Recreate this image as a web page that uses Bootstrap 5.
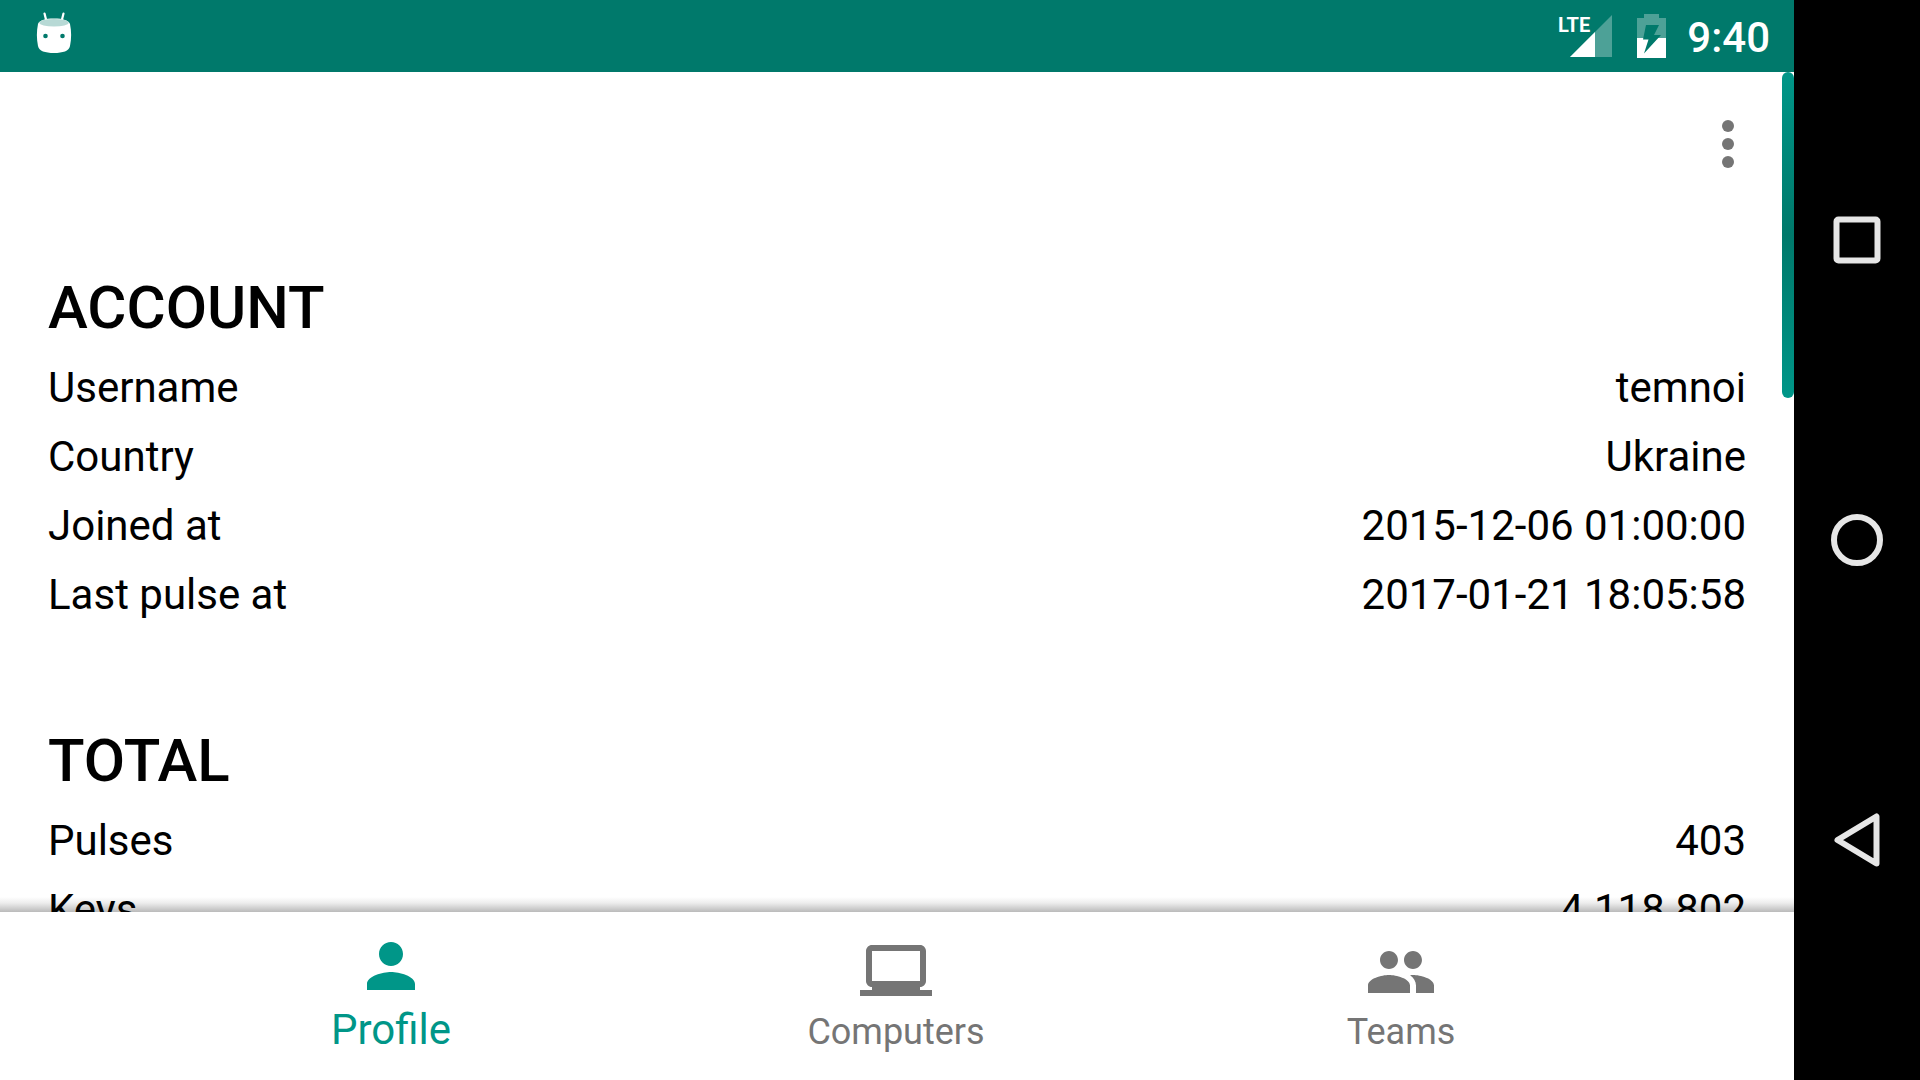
<!DOCTYPE html>
<html lang="en">
<head>
<meta charset="utf-8">
<meta name="viewport" content="width=device-width, initial-scale=1">
<title>Profile</title>
<link href="https://cdn.jsdelivr.net/npm/bootstrap@5.3.0/dist/css/bootstrap.min.css" rel="stylesheet">
<style>
  body { font-family: Roboto, "Noto Sans", sans-serif; font-size: 42px; color: #000; background: #fff; }
  svg { display: block; flex: none; }
  .status-bar { height: 72px; line-height: 72px; background: #00796b; padding: 0 24px 0 18px; }
  .status-clock { font-weight: 500; padding-top: 4px; margin-left: 19px; }
  .battery-icon { margin-left: 22px; }
  .net-label { font: 700 20px/20px "Liberation Sans Narrow", Roboto, sans-serif; fill: #fff; }
  .tool-bar { height: 144px; padding-right: 30px; }
  .stats { padding: 0 48px; }
  .stat-group { padding-top: 56px; margin-bottom: 40px; }
  .stat-group h2 { font-size: 60px; line-height: 72px; font-weight: 500; margin: 0 0 9px; }
  .stat-group dl { line-height: 69px; margin: 0; }
  .stat-group dt, .stat-group dd { font-weight: 400; margin: 0; }
  .scroll-thumb { top: 0; right: 0; width: 12px; height: 326px; border-radius: 6px; background: linear-gradient(#009688, #00796b, #009688); }
  .bottom-shade { bottom: 0; left: 0; right: 0; height: 15px; background: linear-gradient(rgba(0,0,0,0), rgba(0,0,0,.07) 40%, rgba(0,0,0,.27)); }
  .tabs-bar { height: 168px; background: #fff; padding-right: 2px; }
  .tab-link { flex: 1 1 0; max-width: 505px; padding-top: 24px; font-size: 36px; line-height: 48px; color: #757575; }
  .tab-link.active { padding-top: 18px; gap: 4px; font-size: 42px; color: #009688; }
  .system-nav { width: 126px; background: #000; }
  .system-nav button { flex: 0 1 300px; }
  .plain-btn { background: none; border: 0; padding: 0; }
</style>
<script src="https://cdn.jsdelivr.net/npm/bootstrap@5.3.0/dist/js/bootstrap.bundle.min.js"></script>
</head>
<body>
<div class="d-flex vh-100 overflow-hidden">
  <div class="d-flex flex-column flex-grow-1">
    <header class="status-bar d-flex align-items-center text-white">
      <svg width="72" height="72" viewBox="18 0 72 72" aria-hidden="true">
        <path d="M44.500 13.500l2 8M63.500 13.500l-2 8" stroke="#fff" stroke-width="2.200" stroke-linecap="round"/>
        <path d="M38 24C39 20.500 45 18.500 54 18.500S69 20.500 70 24C71.500 31 71.500 39 70 46C69 51 63 53 54 53S39 51 38 46C36.500 39 36.500 31 38 24z" fill="#fff"/>
        <ellipse cx="54" cy="22.800" rx="14.700" ry="3.800" fill="#b7d9d5"/>
        <circle cx="45.500" cy="36" r="2.300" fill="#00796b"/><circle cx="62.500" cy="36" r="2.300" fill="#00796b"/>
      </svg>
      <svg class="ms-auto" width="56" height="72" viewBox="1558 0 56 72" role="img" aria-label="LTE signal">
        <path d="M1570 57L1612 15V57z" fill="#fff" fill-opacity=".3"/>
        <path d="M1570 57L1595 32V57z" fill="#fff"/>
        <text class="net-label" x="1558" y="32">LTE</text>
      </svg>
      <svg class="battery-icon" width="32" height="72" viewBox="1636 0 32 72" role="img" aria-label="Battery charging">
        <path d="M1637 38V18H1644V14H1659V18H1666V38z" fill="#fff" fill-opacity=".3"/>
        <path d="M1637 38H1666V58H1637z" fill="#fff"/>
        <path d="M1646 25H1659L1654 35H1661L1644 53.500L1648.500 39.500H1643z" fill="#00796b"/>
      </svg>
      <time class="status-clock">9:40</time>
    </header>
    <main class="position-relative overflow-hidden flex-grow-1">
      <div class="tool-bar d-flex justify-content-end align-items-center">
        <button class="plain-btn" type="button" aria-label="More options">
          <svg width="72" height="72" viewBox="0 0 24 24" fill="#757575"><circle cx="12" cy="6" r="2"/><circle cx="12" cy="12" r="2"/><circle cx="12" cy="18" r="2"/></svg>
        </button>
      </div>
      <div class="stats">
        <section class="stat-group">
          <h2>ACCOUNT</h2>
          <dl>
            <div class="d-flex justify-content-between"><dt>Username</dt><dd>temnoi</dd></div>
            <div class="d-flex justify-content-between"><dt>Country</dt><dd>Ukraine</dd></div>
            <div class="d-flex justify-content-between"><dt>Joined at</dt><dd>2015-12-06 01:00:00</dd></div>
            <div class="d-flex justify-content-between"><dt>Last pulse at</dt><dd>2017-01-21 18:05:58</dd></div>
          </dl>
        </section>
        <section class="stat-group">
          <h2>TOTAL</h2>
          <dl>
            <div class="d-flex justify-content-between"><dt>Pulses</dt><dd>403</dd></div>
            <div class="d-flex justify-content-between"><dt>Keys</dt><dd>4 118 802</dd></div>
          </dl>
        </section>
      </div>
      <div class="scroll-thumb position-absolute"></div>
      <div class="bottom-shade position-absolute"></div>
    </main>
    <nav class="tabs-bar d-flex justify-content-center flex-shrink-0" aria-label="Sections">
      <a class="tab-link active d-flex flex-column align-items-center text-decoration-none" href="#profile" aria-current="page">
        <svg width="72" height="72" viewBox="0 0 24 24" fill="currentColor"><path d="M12 12c2.210 0 4-1.790 4-4s-1.790-4-4-4-4 1.790-4 4 1.790 4 4 4zm0 2c-2.670 0-8 1.340-8 4v2h16v-2c0-2.660-5.330-4-8-4z"/></svg>
        <span>Profile</span>
      </a>
      <a class="tab-link d-flex flex-column align-items-center text-decoration-none" href="#computers">
        <svg width="72" height="72" viewBox="0 0 24 24" fill="currentColor"><path d="M20 17c1.100 0 2-.9 2-2V5c0-1.100-.9-2-2-2H4c-1.100 0-2 .9-2 2v10c0 1.100.9 2 2 2v1H0v2h24v-2h-4zM4 5h16v10H4z"/></svg>
        <span>Computers</span>
      </a>
      <a class="tab-link d-flex flex-column align-items-center text-decoration-none" href="#teams">
        <svg width="72" height="72" viewBox="0 0 24 24" fill="currentColor"><path d="M16 11c1.660 0 2.990-1.340 2.990-3S17.660 5 16 5c-1.660 0-3 1.340-3 3s1.340 3 3 3zm-8 0c1.660 0 2.990-1.340 2.990-3S9.660 5 8 5C6.340 5 5 6.340 5 8s1.340 3 3 3zm0 2c-2.330 0-7 1.170-7 3.500V19h14v-2.500c0-2.330-4.670-3.500-7-3.500zm8 0c-.29 0-.62.020-.97.050 1.160.84 1.970 1.970 1.970 3.450V19h6v-2.500c0-2.330-4.670-3.500-7-3.500z"/></svg>
        <span>Teams</span>
      </a>
    </nav>
  </div>
  <aside class="system-nav d-flex flex-column justify-content-center flex-shrink-0">
    <button class="plain-btn d-flex align-items-center justify-content-center" type="button" aria-label="Recent apps">
      <svg width="60" height="60" viewBox="0 0 60 60" fill="none" stroke="#e6e6e6" stroke-width="6"><rect x="9.500" y="9.500" width="41" height="41" rx="2"/></svg>
    </button>
    <button class="plain-btn d-flex align-items-center justify-content-center" type="button" aria-label="Home">
      <svg width="60" height="60" viewBox="0 0 60 60" fill="none" stroke="#e6e6e6" stroke-width="6"><circle cx="30" cy="30" r="23"/></svg>
    </button>
    <button class="plain-btn d-flex align-items-center justify-content-center" type="button" aria-label="Back">
      <svg width="60" height="60" viewBox="0 0 60 60" fill="none" stroke="#e6e6e6" stroke-width="6" stroke-linejoin="round"><path d="M10.500 30L49.500 6.500V53.500z"/></svg>
    </button>
  </aside>
</div>
</body>
</html>
